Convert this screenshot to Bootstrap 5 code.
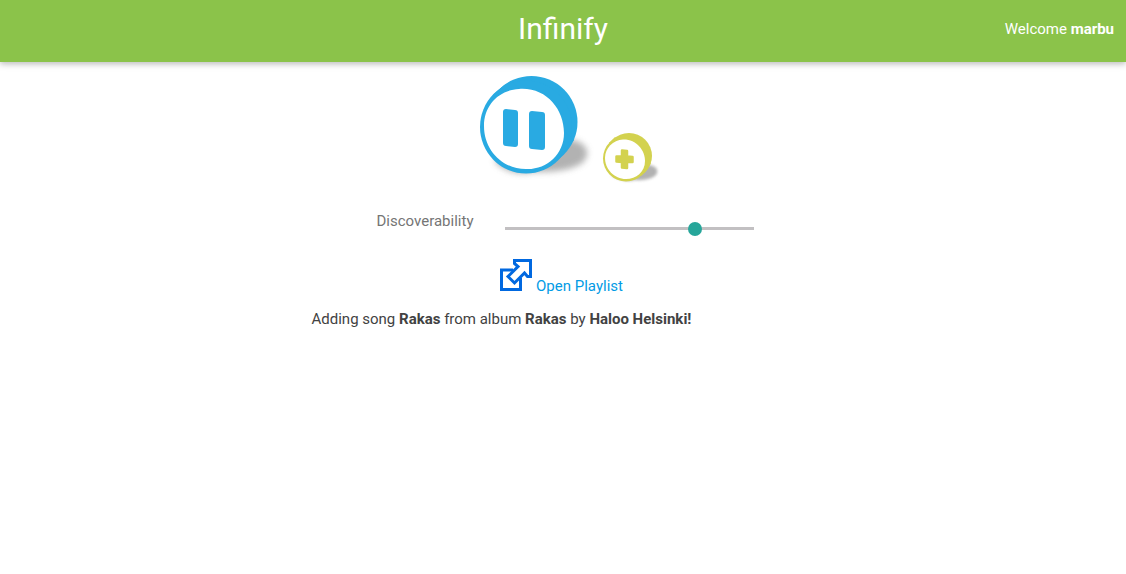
<!DOCTYPE html>
<html lang="en">
<head>
<meta charset="utf-8">
<meta name="viewport" content="width=device-width, initial-scale=1">
<title>Infinify</title>
<link href="https://cdn.jsdelivr.net/npm/bootstrap@5.3.0/dist/css/bootstrap.min.css" rel="stylesheet">
<style>
  body { font-family: Roboto, "Liberation Sans", sans-serif; font-size: 15px; line-height: 22px; color: #424242; background: #fff; }
  .topbar { background: #8bc34a; min-height: 62px; box-shadow: 0 2px 5px 0 rgba(0,0,0,.16), 0 2px 8px 0 rgba(0,0,0,.12); }
  .topbar .row { padding-bottom: 4px; }
  .topbar .navbar-brand { font-size: 30px; line-height: 40px; }
  .player { max-width: 503px; }
  .controls { padding-left: 8px; padding-top: 3px; }
  .icon-btn { background: none; border: 0; padding: 0; line-height: 0; }
  .discover { max-width: 381px; padding-left: 4px; margin-top: 25px; }
  .discover label { color: #757575; width: 128px; }
  .discover .form-range { height: 14px; margin-top: 11px; }
  .form-range::-webkit-slider-runnable-track { height: 3px; background: #c2c0c2; border-radius: 0; }
  .form-range::-webkit-slider-thumb { width: 14px; height: 14px; margin-top: -5px; background: #26a69a; }
  .form-range::-moz-range-track { height: 3px; background: #c2c0c2; border-radius: 0; }
  .form-range::-moz-range-thumb { width: 14px; height: 14px; background: #26a69a; }
  .playlist-link { color: #039be5; }
  .playlist-row { padding-right: 3px; }
  .status-line { margin: 11px 0 0; }
</style>
</head>
<body>
<nav class="navbar topbar p-0">
  <div class="row g-0 w-100 align-items-center text-white">
    <div class="col"></div>
    <div class="col-auto"><a href="#" class="navbar-brand text-white m-0 p-0 pt-1">Infinify</a></div>
    <div class="col text-end"><span class="pe-2 me-1">Welcome <strong>marbu</strong></span></div>
  </div>
</nav>

<main class="player mx-auto">
  <div class="controls d-flex justify-content-center align-items-end">
    <button type="button" class="icon-btn" aria-label="Pause">
      <svg width="126" height="120" viewBox="0 0 126 120">
        <defs><filter id="soft" x="-30%" y="-30%" width="160%" height="160%"><feGaussianBlur stdDeviation="3"/></filter></defs>
        <path d="M25 96Q40 112 65 107Q95 108 112 99Q121 91 117 83Q112 75 98 74L50 82Z" fill="#999" opacity=".75" filter="url(#soft)"/>
        <g fill="#29aae2">
          <circle cx="62.500" cy="57" r="46"/><ellipse cx="57" cy="62" rx="46" ry="46.500"/>
          <path d="M24 30L33 22L42 16L105 75L87 96Z"/>
        </g>
        <path d="M50 24C77 22 95 44 95 68C95 90 77 105 57 104C33 104 15 85 15 61C15 40 30 25 50 24Z" fill="#fff"/>
        <path d="M37 44L46 45Q49 45 49 48V79Q49 82 46 82L37 81Q34 81 34 78V47Q34 44 37 44ZM63 46L73 47Q76 47 76 50V82Q76 85 73 85L63 84Q60 84 60 81V49Q60 46 63 46Z" fill="#29aae2"/>
      </svg>
    </button>
    <button type="button" class="icon-btn" aria-label="Add">
      <svg width="70" height="60" viewBox="0 0 70 60">
        <defs><filter id="soft-small" x="-30%" y="-30%" width="160%" height="160%"><feGaussianBlur stdDeviation="1.500"/></filter></defs>
        <path d="M16 50Q30 58 40 55Q55 56 61 50Q64 45 60 42Q55 39 49 40Z" fill="#999" opacity=".75" filter="url(#soft-small)"/>
        <g fill="#d3d24f">
          <circle cx="34" cy="31" r="23"/><circle cx="31" cy="33.500" r="23"/>
          <path d="M14 18L20 12L56 38L46 51Z"/>
        </g>
        <path d="M28 14.500C41 14 50 25 50 36C50 47 41 54 31 54C19 54 10 44 10 33C10 23 18 15 28 14.500Z" fill="#fff"/>
        <path d="M27 25.500L32 26V31.500L37.500 32V37L32 37V43L27 42.500V37L21.500 36.500V31.500L27 31.500Z" fill="#d3d24f" stroke="#d3d24f" stroke-width="2.500" stroke-linejoin="round"/>
      </svg>
    </button>
  </div>

  <div class="discover d-flex mx-auto">
    <label for="discoverability" class="flex-shrink-0">Discoverability</label>
    <input type="range" class="form-range" id="discoverability" min="0" max="100" value="78">
  </div>

  <div class="playlist-row text-center">
    <a href="#" class="playlist-link text-decoration-none d-inline-flex align-items-baseline gap-1 mt-4">
      <svg width="32" height="32" viewBox="0 0 32 32" fill="#fff" stroke="#0068e0" stroke-width="3" aria-hidden="true">
        <path d="M13 11H1.500V30.500H20.500V19"/>
        <path d="M14.500 1.500H30.500V17.500H27.500L24.500 14L14.500 24L8 17.500L18 7.500L14.500 4.500Z"/>
      </svg>
      <span>Open Playlist</span>
    </a>
  </div>

  <p class="status-line">Adding song <strong>Rakas</strong> from album <strong>Rakas</strong> by <strong>Haloo Helsinki!</strong></p>
</main>
<script src="https://cdn.jsdelivr.net/npm/bootstrap@5.3.0/dist/js/bootstrap.bundle.min.js"></script>
</body>
</html>
